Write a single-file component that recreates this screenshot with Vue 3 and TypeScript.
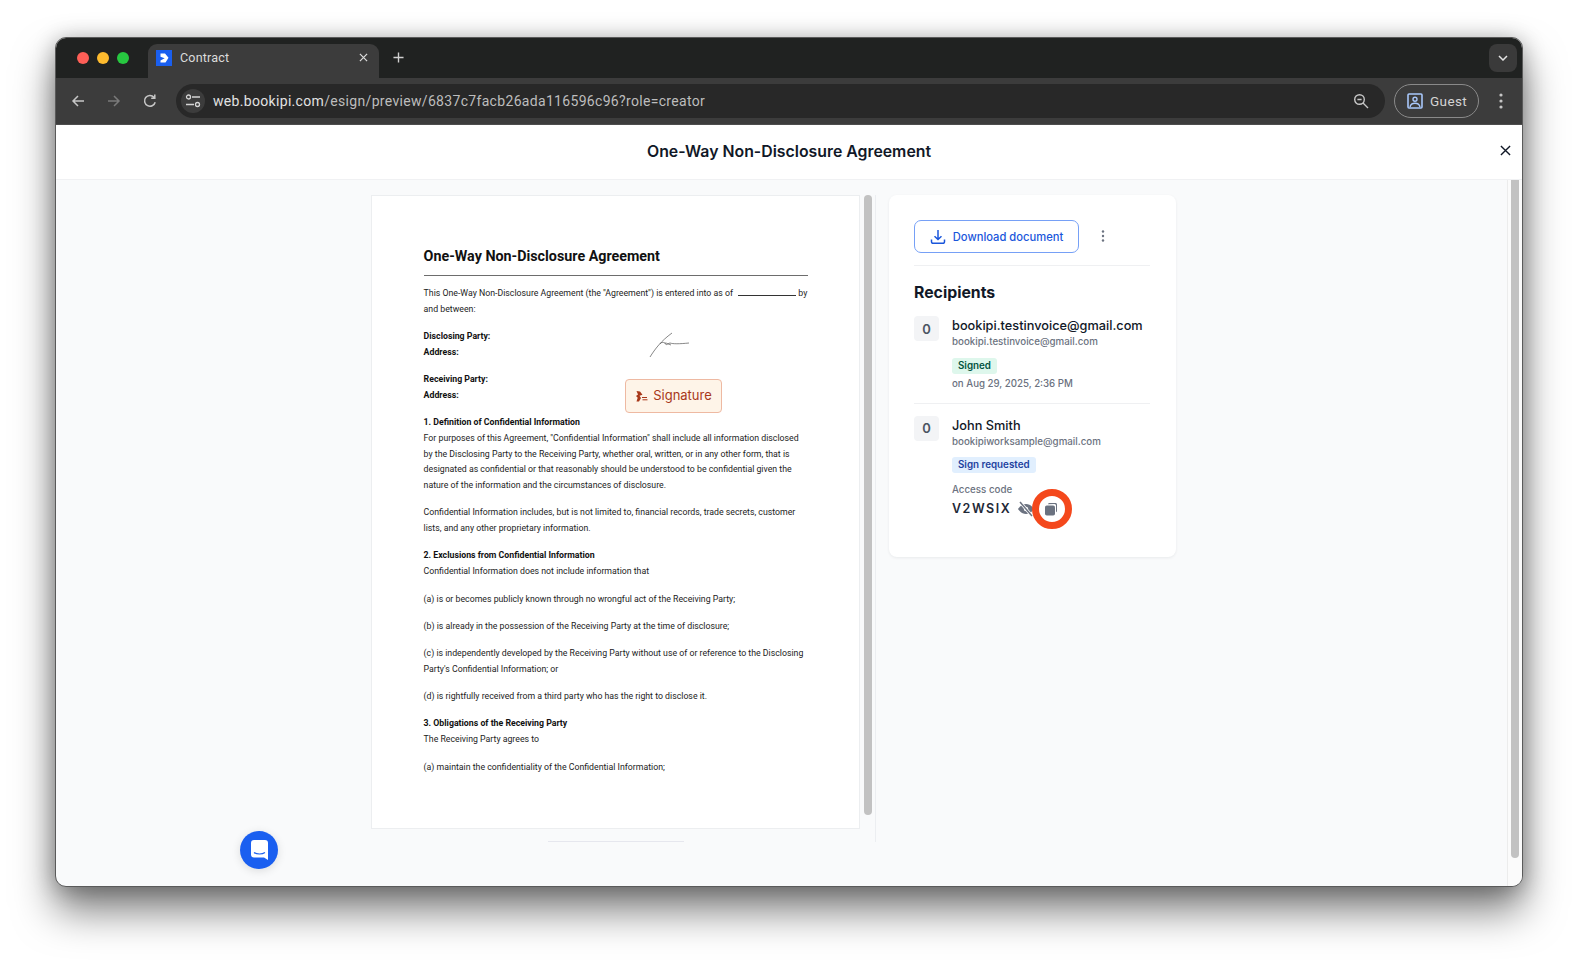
<script setup lang="ts">
interface Para {
  lines: string[]
  head?: string
}

const paragraphs: Para[] = [
  {
    head: '1. Definition of Confidential Information',
    lines: [
      'For purposes of this Agreement, "Confidential Information" shall include all information disclosed',
      'by the Disclosing Party to the Receiving Party, whether oral, written, or in any other form, that is',
      'designated as confidential or that reasonably should be understood to be confidential given the',
      'nature of the information and the circumstances of disclosure.',
    ],
  },
  {
    lines: [
      'Confidential Information includes, but is not limited to, financial records, trade secrets, customer',
      'lists, and any other proprietary information.',
    ],
  },
  {
    head: '2. Exclusions from Confidential Information',
    lines: ['Confidential Information does not include information that'],
  },
  { lines: ['(a) is or becomes publicly known through no wrongful act of the Receiving Party;'] },
  { lines: ['(b) is already in the possession of the Receiving Party at the time of disclosure;'] },
  {
    lines: [
      '(c) is independently developed by the Receiving Party without use of or reference to the Disclosing',
      "Party's Confidential Information; or",
    ],
  },
  { lines: ['(d) is rightfully received from a third party who has the right to disclose it.'] },
  {
    head: '3. Obligations of the Receiving Party',
    lines: ['The Receiving Party agrees to'],
  },
  { lines: ['(a) maintain the confidentiality of the Confidential Information;'] },
]
</script>

<template>
  <div class="window">
    <div class="tabstrip">
      <div class="lights">
        <span class="light red"></span>
        <span class="light yellow"></span>
        <span class="light green"></span>
      </div>
      <div class="tab">
        <svg class="favicon" viewBox="0 0 16 16">
          <rect width="16" height="16" fill="#1a5ff0" />
          <path d="M4.500 3.500H9l3.500 4.200-3 4.800H4.500v-2L8.700 8.200 4.500 6.700z" fill="#fff" />
        </svg>
        <span class="tab-title">Contract</span>
        <svg class="tab-close" viewBox="0 0 10 10">
          <path d="M1 1l8 8M9 1l-8 8" stroke="#d8d8d8" stroke-width="1.4" fill="none" />
        </svg>
      </div>
      <svg class="new-tab" viewBox="0 0 12 12">
        <path d="M6 .5v11M.5 6h11" stroke="#d0d0d0" stroke-width="1.5" fill="none" />
      </svg>
      <div class="tab-menu">
        <svg width="10" height="6" viewBox="0 0 10 6">
          <path d="M1 1l4 4 4-4" stroke="#e4e4e4" stroke-width="1.5" fill="none" />
        </svg>
      </div>
    </div>

    <div class="toolbar">
      <svg class="nav-icon" viewBox="0 0 16 16">
        <path d="M14 8H3M8 3L3 8l5 5" stroke="#c6c6c6" stroke-width="1.5" fill="none" />
      </svg>
      <svg class="nav-icon" viewBox="0 0 16 16">
        <path d="M2 8h11M8 3l5 5-5 5" stroke="#7a7a7a" stroke-width="1.5" fill="none" />
      </svg>
      <svg class="nav-icon" viewBox="0 0 16 16">
        <path d="M13.2 9.2A5.4 5.4 0 1 1 12 4.2M12.8 1.6v3.6H9.2" stroke="#c6c6c6" stroke-width="1.5" fill="none" />
      </svg>
      <div class="omnibox">
        <div class="site-info">
          <svg width="16" height="14" viewBox="0 0 16 14">
            <circle cx="3.5" cy="3" r="2" stroke="#d4d4d4" stroke-width="1.3" fill="none" />
            <path d="M7 3h8M1 10.5h8" stroke="#d4d4d4" stroke-width="1.3" fill="none" />
            <circle cx="12.5" cy="10.5" r="2" stroke="#d4d4d4" stroke-width="1.3" fill="none" />
          </svg>
        </div>
        <span class="url"><span class="url-host">web.bookipi.com</span>/esign/preview/6837c7facb26ada116596c96?role=creator</span>
        <svg class="zoom-icon" viewBox="0 0 16 16">
          <circle cx="6.5" cy="6.5" r="4.8" stroke="#c6c6c6" stroke-width="1.4" fill="none" />
          <path d="M4.4 6.5h4.2M10 10l5 5" stroke="#c6c6c6" stroke-width="1.4" fill="none" />
        </svg>
      </div>
      <div class="guest">
        <svg width="16" height="16" viewBox="0 0 16 16">
          <rect x="1" y="1" width="14" height="14" rx="1" stroke="#a8c7fa" stroke-width="1.6" fill="none" />
          <circle cx="8" cy="6.2" r="2" stroke="#a8c7fa" stroke-width="1.4" fill="none" />
          <path d="M3 14c.6-3 2.500-3.800 5-3.800s4.400.8 5 3.800" stroke="#a8c7fa" stroke-width="1.4" fill="none" />
        </svg>
        <span>Guest</span>
      </div>
      <svg class="kebab" width="4" height="16" viewBox="0 0 4 16">
        <circle cx="2" cy="2" r="1.6" fill="#c6c6c6" />
        <circle cx="2" cy="8" r="1.6" fill="#c6c6c6" />
        <circle cx="2" cy="14" r="1.6" fill="#c6c6c6" />
      </svg>
    </div>

    <div class="page">
      <header class="page-head">
        <h1>One-Way Non-Disclosure Agreement</h1>
        <svg class="page-close" viewBox="0 0 12 12">
          <path d="M1 1l10 10M11 1L1 11" stroke="#111827" stroke-width="1.5" fill="none" />
        </svg>
      </header>

      <div class="page-body">
        <div class="doc-col">
          <div class="doc-row">
            <article class="doc">
              <h2>One-Way Non-Disclosure Agreement</h2>
              <hr />
              <p class="para">
                <span class="line">This One-Way Non-Disclosure Agreement (the "Agreement") is entered into as of <span class="blank"></span> by</span>
                <span class="line">and between:</span>
              </p>
              <p class="para">
                <span class="line bold">Disclosing Party:</span>
                <span class="line bold">Address:</span>
              </p>
              <p class="para">
                <span class="line bold">Receiving Party:</span>
                <span class="line bold">Address:</span>
              </p>
              <p v-for="(p, i) in paragraphs" :key="i" class="para">
                <span v-if="p.head" class="line bold">{{ p.head }}</span>
                <span v-for="l in p.lines" :key="l" class="line">{{ l }}</span>
              </p>

              <svg class="scribble" width="42" height="26" viewBox="0 0 42 26">
                <path d="M1 25C6 17 12 9 23 1M11 12c1-2 3-2 5-1 1 3 2 1 5 0 3 1 9 1 19 0M16 11c2 0 3 1 6 2"
                  stroke="#555" stroke-width=".7" fill="none" />
              </svg>
              <div class="sig-field">
                <svg width="13" height="14" viewBox="0 0 13 14">
                  <path d="M1.500 2l3.500.6 2.500 3.200-3 1 1.500 2.200-2 3.500H1.500l1.200-3.700L1 7l2-1.500z" fill="#a8381a" />
                  <path d="M7 8.500h5M7.500 10.800h5" stroke="#a8381a" stroke-width="1" fill="none" />
                </svg>
                <span>Signature</span>
              </div>
            </article>
            <div class="doc-scroll"><div class="doc-thumb"></div></div>
          </div>
          <div class="doc-rule"></div>
        </div>

        <aside class="card">
          <div class="actions">
            <button class="download" type="button">
              <svg width="16" height="16" viewBox="0 0 16 16">
                <path d="M8 1v9.500M4.500 7.200L8 10.500l3.500-3.300M1.500 10.500v2.300a1.500 1.500 0 0 0 1.500 1.500h10a1.500 1.500 0 0 0 1.500-1.500v-2.300"
                  stroke="#1a56db" stroke-width="1.500" fill="none" />
              </svg>
              <span>Download document</span>
            </button>
            <svg class="more" width="4" height="12" viewBox="0 0 4 12">
              <circle cx="2" cy="1.500" r="1.200" fill="#6b7280" />
              <circle cx="2" cy="6" r="1.200" fill="#6b7280" />
              <circle cx="2" cy="10.500" r="1.200" fill="#6b7280" />
            </svg>
          </div>

          <h3>Recipients</h3>

          <div class="recipient first">
            <div class="avatar">0</div>
            <div class="info">
              <div class="name">bookipi.testinvoice@gmail.com</div>
              <div class="mail">bookipi.testinvoice@gmail.com</div>
              <span class="badge signed">Signed</span>
              <div class="when">on Aug 29, 2025, 2:36 PM</div>
            </div>
          </div>

          <div class="recipient">
            <div class="avatar">0</div>
            <div class="info">
              <div class="name">John Smith</div>
              <div class="mail">bookipiworksample@gmail.com</div>
              <span class="badge requested">Sign requested</span>
              <div class="code-label">Access code</div>
              <div class="code-row">
                <span class="code">V2WSIX</span>
                <svg class="eye" width="18" height="16" viewBox="0 0 18 16">
                  <path d="M1 8s3-5 8-5 8 5 8 5-3 5-8 5-8-5-8-5z" fill="#6b7280" />
                  <circle cx="9" cy="8" r="2.200" fill="#fff" />
                  <path d="M3 1l12 14" stroke="#fff" stroke-width="3" />
                  <path d="M3 1l12 14" stroke="#6b7280" stroke-width="1.500" />
                </svg>
                <span class="copy">
                  <svg width="14" height="14" viewBox="0 0 14 14">
                    <path d="M4 2.200A1.500 1.500 0 0 1 5.500 1h6.300A1.500 1.500 0 0 1 13 2.500v6.300a1.500 1.500 0 0 1-1 1.400V3.500A1.500 1.500 0 0 0 10.500 2z" fill="#6b7280" />
                    <rect x="1" y="3.500" width="10" height="10" rx="1.800" fill="#6b7280" />
                  </svg>
                  <span class="ring"></span>
                </span>
              </div>
            </div>
          </div>
        </aside>

        <div class="page-scroll"><div class="page-thumb"></div></div>
      </div>

      <button class="chat" type="button" aria-label="Chat">
        <svg width="17" height="20" viewBox="0 0 17 20">
          <path d="M3 0h11a3 3 0 0 1 3 3v17l-4-2.500H3a3 3 0 0 1-3-3V3a3 3 0 0 1 3-3z" fill="#fff" />
          <path d="M3 12.500c3 2 8 2 11 0" stroke="#1a5ff0" stroke-width="1.200" fill="none" />
        </svg>
      </button>
    </div>
  </div>
</template>

<style>
html {
  background: #fff;
  overflow: hidden;
}

body {
  margin: 0;
  min-height: 960px;
}
</style>

<style scoped>
.window {
  box-sizing: border-box;
  width: 1468px;
  height: 850px;
  margin: 37px 0 0 55px;
  border: 1px solid #5a5a5a;
  border-radius: 11px;
  overflow: hidden;
  display: flex;
  flex-direction: column;
  box-shadow: 0 24px 40px rgba(0, 0, 0, 0.5), 0 2px 22px rgba(0, 0, 0, 0.28);
  font-family: Inter, "Noto Sans", sans-serif;
  background: #f9fafb;
}

/* tab strip */
.tabstrip {
  flex: 0 0 40px;
  display: flex;
  align-items: flex-end;
  background: #202221;
  padding-left: 21px;
}

.lights {
  display: flex;
  gap: 8px;
  align-self: flex-start;
  margin-top: 14px;
}

.light {
  width: 12px;
  height: 12px;
  border-radius: 50%;
}

.red { background: #fe5f57; }
.yellow { background: #febb2e; }
.green { background: #27c840; }

.tab {
  box-sizing: border-box;
  width: 231px;
  height: 34px;
  margin-left: 19px;
  padding: 0 11px 7px 8px;
  display: flex;
  align-items: center;
  background: #3c3c3c;
  border-radius: 9px 9px 0 0;
}

.favicon {
  width: 16px;
  height: 16px;
}

.tab-title {
  margin-left: 8px;
  font: 400 12.5px Roboto, sans-serif;
  letter-spacing: 0.2px;
  color: #dcdcdc;
}

.tab-close {
  width: 9px;
  height: 9px;
  margin-left: auto;
}

.new-tab {
  width: 11px;
  height: 11px;
  margin: 0 0 15px 14px;
}

.tab-menu {
  align-self: flex-start;
  width: 28px;
  height: 28px;
  margin: 6px 5px 0 auto;
  border-radius: 8px;
  background: #3a3a3a;
  display: flex;
  align-items: center;
  justify-content: center;
}

/* toolbar */
.toolbar {
  flex: 0 0 47px;
  box-sizing: border-box;
  display: flex;
  align-items: center;
  background: #3c3c3c;
  border-bottom: 1px solid #4d4d4d;
  padding: 0 0 1px 14px;
}

.nav-icon {
  width: 16px;
  height: 16px;
  margin-right: 20px;
}

.omnibox {
  box-sizing: border-box;
  width: 1209px;
  height: 34px;
  margin-left: -2px;
  padding: 0 16px 0 5px;
  display: flex;
  align-items: center;
  border-radius: 17px;
  background: #282828;
}

.site-info {
  width: 24px;
  height: 24px;
  border-radius: 50%;
  background: #3c3c3c;
  display: flex;
  align-items: center;
  justify-content: center;
}

.url {
  margin-left: 8px;
  font: 400 14px Roboto, sans-serif;
  letter-spacing: 0.32px;
  color: #bdbdbd;
  white-space: nowrap;
}

.url-host {
  color: #e2e2e2;
}

.zoom-icon {
  width: 16px;
  height: 16px;
  margin-left: auto;
}

.guest {
  box-sizing: border-box;
  width: 85px;
  height: 34px;
  margin-left: 9px;
  padding-left: 12px;
  display: flex;
  align-items: center;
  gap: 7px;
  border: 1px solid #8a8a8a;
  border-radius: 17px;
  font: 400 13.5px Roboto, sans-serif;
  letter-spacing: 0.4px;
  color: #d4d4d4;
}

.kebab {
  margin-left: 20px;
}

/* page */
.page {
  flex: 1;
  min-height: 0;
  display: flex;
  flex-direction: column;
  position: relative;
}

.page-head {
  flex: 0 0 54px;
  display: flex;
  align-items: center;
  justify-content: center;
  position: relative;
  background: #fff;
  border-bottom: 1px solid #f0f1f3;
}

.page-head h1 {
  margin: 0 0 2px;
  font-size: 15.850px;
  font-weight: 600;
  color: #111827;
}

.page-close {
  position: absolute;
  right: 11px;
  top: 20px;
  width: 11px;
  height: 11px;
}

.page-body {
  flex: 1;
  min-height: 0;
  display: flex;
  align-items: flex-start;
  padding: 15px 0 0 315px;
  position: relative;
}

.doc-col {
  display: flex;
  flex-direction: column;
  width: 504px;
  height: 647px;
  border-right: 1px solid #eceef1;
}

.doc-row {
  display: flex;
  height: 634px;
  flex: none;
}

.doc {
  box-sizing: border-box;
  width: 489px;
  height: 634px;
  position: relative;
  background: #fff;
  border: 1px solid #eceef0;
  padding: 50px 51px 0 51.600px;
  font-family: Roboto, sans-serif;
  font-size: 8.750px;
  line-height: 15.750px;
  color: #1c1c1c;
}

.doc h2 {
  margin: 0;
  font-size: 14.300px;
  line-height: 20px;
  font-weight: 700;
  color: #111;
}

.doc hr {
  margin: 9px 0 10px;
  height: 1px;
  border: 0;
  background: #6d6d6d;
}

.para {
  margin: 0 0 11.550px;
}

.line {
  display: block;
  white-space: nowrap;
}

.bold {
  font-weight: 700;
  color: #111;
}

.blank {
  display: inline-block;
  width: 58px;
  margin: 0 0 0 3px;
  border-bottom: 1px solid #333;
}

.scribble {
  position: absolute;
  left: 277px;
  top: 136px;
}

.sig-field {
  box-sizing: border-box;
  position: absolute;
  left: 253px;
  top: 183px;
  width: 97px;
  height: 34px;
  display: flex;
  align-items: center;
  justify-content: center;
  gap: 5px;
  background: #fef4e8;
  border: 1px solid #eeb9a2;
  border-radius: 4px;
  font-family: Inter, sans-serif;
  font-size: 13px;
  color: #a8381a;
}

.doc-scroll {
  width: 8px;
  margin-left: 4px;
  height: 620px;
}

.doc-thumb {
  width: 8px;
  height: 620px;
  border-radius: 4px;
  background: #c2c2c2;
}

.doc-rule {
  width: 136px;
  height: 1px;
  margin: 12px 0 0 177px;
  background: #e6e7ee;
}

/* card */
.card {
  box-sizing: border-box;
  width: 287px;
  height: 362px;
  margin-left: 13px;
  padding: 25px 26px 0 25px;
  background: #fff;
  border-radius: 8px;
  box-shadow: 0 1px 3px rgba(17, 24, 39, 0.07);
}

.actions {
  display: flex;
  height: 45px;
  align-items: flex-start;
  border-bottom: 1px solid #eff0f2;
}

.download {
  box-sizing: border-box;
  width: 165px;
  height: 33px;
  display: flex;
  align-items: center;
  justify-content: center;
  gap: 7px;
  padding: 0;
  background: #fff;
  border: 1px solid #76a0f6;
  border-radius: 7px;
  font: 500 11.200px Inter, sans-serif;
  color: #1a56db;
}

.more {
  margin: 10px 0 0 22px;
}

.card h3 {
  margin: 16px 0 12px;
  font-size: 15.800px;
  line-height: 22px;
  font-weight: 700;
  color: #111827;
}

.recipient {
  display: flex;
  gap: 13px;
  padding-top: 12px;
}

.recipient.first {
  padding: 0 0 11px;
  border-bottom: 1px solid #eff0f2;
}

.avatar {
  flex: 0 0 25px;
  height: 25px;
  border-radius: 4px;
  background: #f3f4f6;
  display: flex;
  align-items: center;
  justify-content: center;
  font-size: 13px;
  font-weight: 600;
  color: #4b5563;
}

.name {
  padding-top: 1px;
  margin-bottom: -1px;
  font-size: 12.750px;
  line-height: 18px;
  font-weight: 500;
  color: #111827;
  white-space: nowrap;
}

.mail {
  font-size: 9.750px;
  line-height: 15px;
  font-weight: 500;
  color: #6b7280;
  white-space: nowrap;
}

.badge {
  display: inline-block;
  margin-top: 8.500px;
  padding: 0 6px;
  height: 16px;
  line-height: 16px;
  border-radius: 3px;
  font-size: 9.800px;
  font-weight: 600;
}

.signed {
  background: #def7ec;
  color: #03543f;
}

.requested {
  background: #e1effe;
  color: #1e429f;
}

.when {
  margin-top: 2px;
  font-size: 9.700px;
  line-height: 16px;
  font-weight: 500;
  color: #6b7280;
}

.code-label {
  margin-top: 8.500px;
  font-size: 9.750px;
  line-height: 15px;
  font-weight: 500;
  color: #6b7280;
}

.code-row {
  display: flex;
  align-items: center;
  margin-top: 2px;
  height: 20px;
}

.code {
  font-size: 12.500px;
  font-weight: 600;
  letter-spacing: 1.500px;
  color: #1f2937;
}

.eye {
  margin-left: 6px;
}

.copy {
  position: relative;
  display: flex;
  margin-left: 9px;
}

.ring {
  position: absolute;
  left: 50%;
  top: 50%;
  width: 26px;
  height: 26px;
  margin: -19.500px 0 0 -19px;
  border: 7px solid #f4481c;
  border-radius: 50%;
}

/* page scrollbar */
.page-scroll {
  position: absolute;
  right: 0;
  top: 0;
  bottom: 0;
  width: 14px;
  background: #fbfbfb;
  border-left: 1px solid #ececec;
}

.page-thumb {
  width: 8px;
  height: 678px;
  margin-left: 3px;
  border-radius: 0 0 4px 4px;
  background: #c2c2c2;
}

.chat {
  position: absolute;
  left: 184px;
  bottom: 17px;
  width: 38px;
  height: 38px;
  padding: 0;
  border: 0;
  border-radius: 50%;
  background: #1a5ff0;
  box-shadow: 0 2px 10px rgba(0, 0, 0, 0.12);
  display: flex;
  align-items: center;
  justify-content: center;
}
</style>
